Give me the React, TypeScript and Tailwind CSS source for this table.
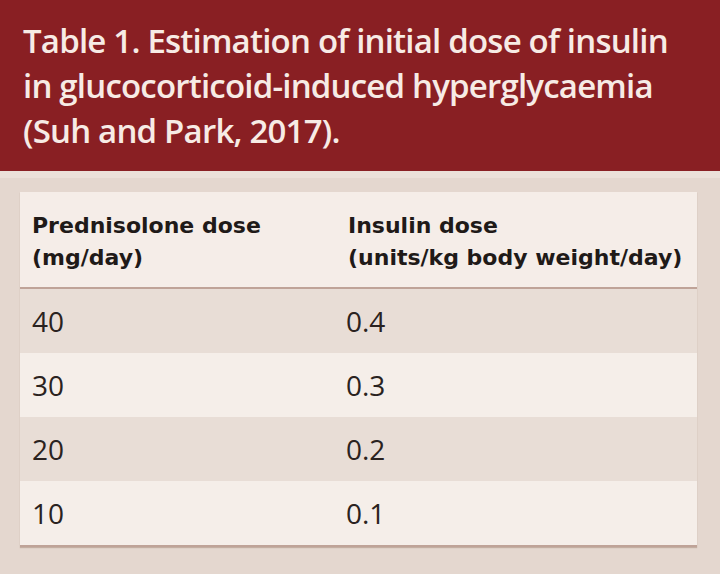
const rows = [
  { pred: "40", ins: "0.4" },
  { pred: "30", ins: "0.3" },
  { pred: "20", ins: "0.2" },
  { pred: "10", ins: "0.1" },
]

export default function App() {
  return (
    <div className="w-[720px] h-[574px] bg-[#e4d7cf] overflow-hidden">
      <div className="h-[171px] bg-[#891f23] pl-[23px] pt-[18px]">
        <h1
          className="text-[#f7ebe5] text-[33px] leading-[45px] font-semibold tracking-[-0.8px] whitespace-nowrap"
          style={{ fontFamily: '"Open Sans", sans-serif' }}
        >
          Table 1. Estimation of initial dose of insulin
          <br />
          in glucocorticoid-induced hyperglycaemia
          <br />
          (Suh and Park, 2017).
        </h1>
      </div>
      <div className="h-[7px] bg-[#ebe0d9]" />
      <div className="pl-[20px] pr-[23px] pt-[14px]">
        <div className="bg-[#f5ede8] shadow-[0_1px_1px_rgba(120,80,60,0.3)]">
          <div
            className="flex h-[97px] pt-[18px] pl-[12px] border-b-2 border-[#bfa398] text-[#1f1a18] font-bold text-[22px] leading-[32px] whitespace-nowrap"
            style={{ fontFamily: '"DejaVu Sans", sans-serif' }}
          >
            <div className="w-[316px]">
              Prednisolone dose
              <br />
              (mg/day)
            </div>
            <div>
              Insulin dose
              <br />
              (units/kg body weight/day)
            </div>
          </div>
          {rows.map((r, i) => (
            <div
              key={r.pred}
              className={`flex items-center h-[64px] pl-[12px] text-[#2a2220] text-[28px] ${i % 2 === 0 ? "bg-[#e8ddd6]" : "bg-[#f5eee9]"}`}
              style={{ fontFamily: '"Open Sans", sans-serif' }}
            >
              <div className="w-[314px]">{r.pred}</div>
              <div>{r.ins}</div>
            </div>
          ))}
          <div className="h-[2px] bg-[#bfa398]" />
        </div>
      </div>
    </div>
  )
}
